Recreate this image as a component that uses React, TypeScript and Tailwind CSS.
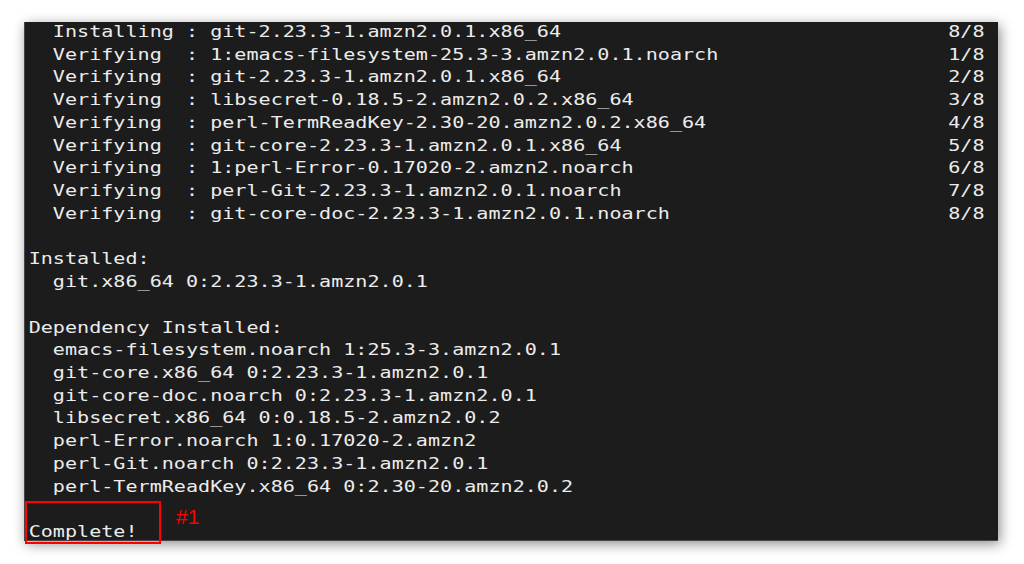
import React from 'react'

type Row = { text: string; count?: string }

const rows: Row[] = [
  { text: '  Installing : git-2.23.3-1.amzn2.0.1.x86_64', count: '8/8' },
  { text: '  Verifying  : 1:emacs-filesystem-25.3-3.amzn2.0.1.noarch', count: '1/8' },
  { text: '  Verifying  : git-2.23.3-1.amzn2.0.1.x86_64', count: '2/8' },
  { text: '  Verifying  : libsecret-0.18.5-2.amzn2.0.2.x86_64', count: '3/8' },
  { text: '  Verifying  : perl-TermReadKey-2.30-20.amzn2.0.2.x86_64', count: '4/8' },
  { text: '  Verifying  : git-core-2.23.3-1.amzn2.0.1.x86_64', count: '5/8' },
  { text: '  Verifying  : 1:perl-Error-0.17020-2.amzn2.noarch', count: '6/8' },
  { text: '  Verifying  : perl-Git-2.23.3-1.amzn2.0.1.noarch', count: '7/8' },
  { text: '  Verifying  : git-core-doc-2.23.3-1.amzn2.0.1.noarch', count: '8/8' },
  { text: '' },
  { text: 'Installed:' },
  { text: '  git.x86_64 0:2.23.3-1.amzn2.0.1' },
  { text: '' },
  { text: 'Dependency Installed:' },
  { text: '  emacs-filesystem.noarch 1:25.3-3.amzn2.0.1' },
  { text: '  git-core.x86_64 0:2.23.3-1.amzn2.0.1' },
  { text: '  git-core-doc.noarch 0:2.23.3-1.amzn2.0.1' },
  { text: '  libsecret.x86_64 0:0.18.5-2.amzn2.0.2' },
  { text: '  perl-Error.noarch 1:0.17020-2.amzn2' },
  { text: '  perl-Git.noarch 0:2.23.3-1.amzn2.0.1' },
  { text: '  perl-TermReadKey.x86_64 0:2.30-20.amzn2.0.2' },
  { text: '' },
  { text: 'Complete!' },
]

const line = (r: Row) => (r.count ? r.text.padEnd(76, ' ') + r.count : r.text || ' ')

export default function App() {
  return (
    <div className="w-full h-[564px] bg-white pt-[22px] pl-[24px]">
      <div className="relative w-[974px] h-[519px]">
        <div className="w-full h-full bg-[#1c1c1c] border-l border-b border-[#474747] shadow-[2px_3px_12px_rgba(0,0,0,0.45)] overflow-hidden">
          <div className="-mt-[1px] pl-[3px] origin-left scale-x-[1.218] font-['DejaVu_Sans_Mono',monospace] text-[16.5px] leading-[22.73px] text-[#ececec] whitespace-pre">
            {rows.map((r, i) => (
              <div key={i}>{line(r)}</div>
            ))}
          </div>
        </div>

        <div className="absolute left-[1px] top-[479px] w-[136px] h-[43px] border-2 border-[#ff0000]" />
        <span className="absolute left-[152px] top-[484px] font-['Liberation_Sans',Arial,sans-serif] text-[21px] leading-none text-[#ff0000]">
          #1
        </span>
      </div>
    </div>
  )
}
